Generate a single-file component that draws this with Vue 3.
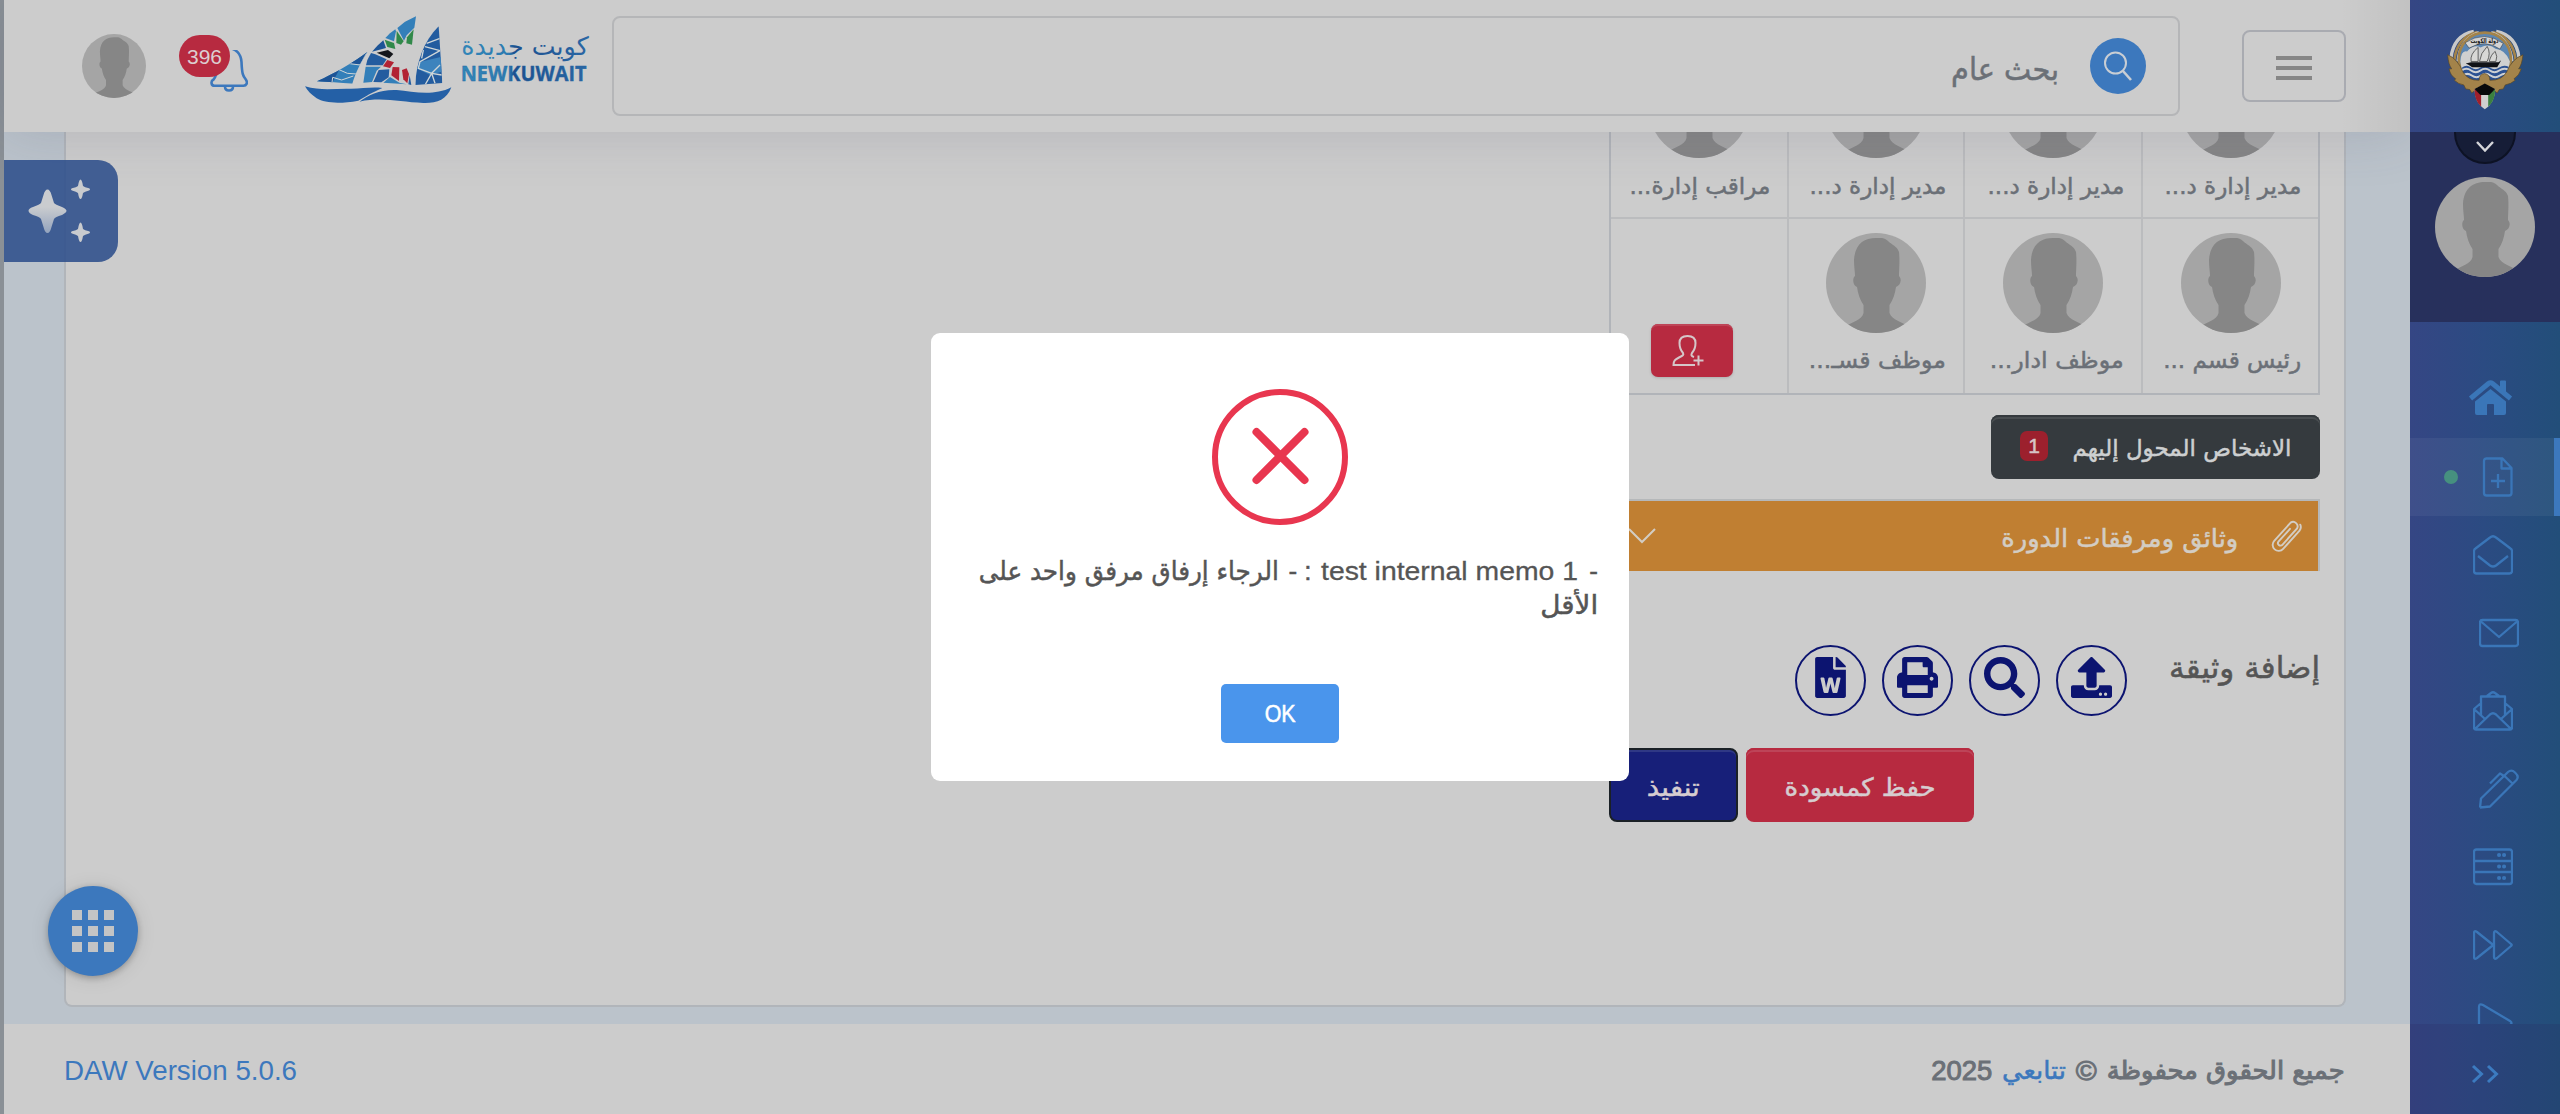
<script setup>
import { h } from 'vue'

// Scales a one-line label horizontally so that it takes a given width in the flow.
const vFit = {
  mounted(el, { value }) {
    const natural = el.getBoundingClientRect().width
    const rtl = getComputedStyle(el).direction === 'rtl'
    el.style.transformOrigin = rtl ? 'right center' : 'left center'
    el.style.transform = `scaleX(${value / natural})`
    el.style[rtl ? 'marginLeft' : 'marginRight'] = `${value - natural}px`
  },
}

const Avatar = () =>
  h('svg', { viewBox: '0 0 100 100', width: '100%', height: '100%', style: 'display:block;border-radius:50%' }, [
    h('rect', { width: 100, height: 100, fill: '#a5a5a5' }),
    h('path', {
      fill: '#868686',
      d: 'M50 5C38 5 29 11 28 27C28 34 29 39 29 43C26 45 27 53 31 54C32 61 34 67 37.500 72V80C36 87 26 89 18 94V100H84V94C76 89 66 87 63.500 80V72C67 67 69 61 70 54C75 52 76 46 73 43C73 36 74 28 73 19C71 13 66 12 62 8C58 4 54 5 50 5Z',
    }),
  ])

const topRow = [
  { name: 'مدير إدارة د...', w: 137 },
  { name: 'مدير إدارة د...', w: 137 },
  { name: 'مدير إدارة د...', w: 137 },
  { name: 'مراقب إدارة...', w: 141 },
]
const bottomRow = [
  { name: 'رئيس قسم ...', w: 138 },
  { name: 'موظف ادار...', w: 134 },
  { name: 'موظف قسـ...', w: 137 },
]

const sailTiles = [
  { c: '#337fb9', p: '378,49 345,65 322,84 342,122 350,106 373,83' },
  { c: '#337fb9', p: '316,88 300,100 286,114 312,124 318,94' },
  { c: '#31894a', p: '320,92 319,129 333,134 341,124' },
  { c: '#31894a', p: '371,88 351,112 349,130 366,134' },
  { c: '#31894a', p: '284,119 292,141 316,147 312,129' },
  { c: '#1d5496', p: '280,121 262,137 246,155 288,144' },
  { c: '#14161b', p: '260,158 294,150 310,162 298,175' },
  { c: '#235c9f', p: '243,159 232,180 228,196 278,196 290,178 256,163' },
  { c: '#b22334', p: '292,180 312,187 300,204 279,199' },
  { c: '#337fb9', p: '227,200 273,200 260,212 246,246 220,248' },
  { c: '#235c9f', p: '266,210 298,208 296,232 274,247 250,246' },
  { c: '#b22334', p: '308,201 328,202 327,243 304,226' },
  { c: '#b22334', p: '336,210 350,205 357,222 352,250 340,238' },
  { c: '#337fb9', p: '300,231 328,248 350,253 280,248' },
  { c: '#235c9f', p: '359,226 364,255 355,253' },
]

const menu = [
  { id: 'file', active: true, d: 'M13 1.500H29.500L38.500 11V36Q38.500 38.500 36 38.500H13.500Q11 38.500 11 36V4Q11 1.500 13.500 1.500M28.500 2V11.500H38M25 17V31M18 24H32' },
  { id: 'open', d: 'M1 36V16Q1 14.500 2.500 13.500L17 2.500Q20 0 23 2.500L37.500 13.500Q39 14.500 39 16V36Q39 38.500 36.500 38.500H3.500Q1 38.500 1 36M5 21L17 30.500Q20 32.500 23 30.500L35 21' },
  { id: 'mail', shift: true, d: 'M3.500 7H36.500Q39 7 39 9.500V30.500Q39 33 36.500 33H3.500Q1 33 1 30.500V9.500Q1 7 3.500 7M2 8.500L20 24L38 8.500' },
  { id: 'letter', d: 'M1 36.500V18L8 12M39 36.500V18L32 12M3 38.500H37Q39 38.500 39 36.500M1 36.500Q1 38.500 3 38.500M8 25V5.500H32V25M14 5L18 2Q20 .500 22 2L26 5M1 18L12 28M39 18L28 28M2 38L17 23.500Q20 21 23 23.500L38 38' },
  { id: 'pen', shift: true, d: 'M1 38.500L2 29.500L25 7L29 3Q32.500 0 36 3.500Q40.500 7.500 37.500 11L11 37.500L1 38.500M25 6.500L34 15M11 14.500L21 4.500L25 7' },
  { id: 'server', d: 'M3.500 2.500H36.500Q39 2.500 39 5V34Q39 37 36.500 37H3.500Q1 37 1 34V5Q1 2.500 3.500 2.500M1 14H39M1 25H39', dots: true },
  { id: 'forward', d: 'M1 8Q1 5 4 7L19 19Q20 20 19 21L4 33Q1 35 1 32ZM21 8Q21 5 24 7L38 19Q39.500 20 38 21L24 33Q21 35 21 32Z' },
  { id: 'play', d: 'M6 36V4Q6 0 10 2L37 18Q40 20 37 22L10 38Q6 40 6 36' },
]

const tools = [
  { id: 'upload', box: '0 0 512 512', d: 'M296 384h-80c-13.300 0-24-10.700-24-24V192h-87.700c-17.800 0-26.700-21.500-14.100-34.100L242.300 5.700c7.500-7.500 19.800-7.500 27.300 0l152.200 152.200c12.600 12.600 3.700 34.100-14.100 34.100H320v168c0 13.300-10.700 24-24 24zm216-8v112c0 13.300-10.700 24-24 24H24c-13.300 0-24-10.700-24-24V376c0-13.300 10.700-24 24-24h136v8c0 30.900 25.100 56 56 56h80c30.900 0 56-25.100 56-56v-8h136c13.300 0 24 10.700 24 24zm-124 88c0-11-9-20-20-20s-20 9-20 20 9 20 20 20 20-9 20-20zm64 0c0-11-9-20-20-20s-20 9-20 20 9 20 20 20 20-9 20-20z' },
  { id: 'search', box: '0 0 512 512', d: 'M505 442.700L405.300 343c-4.500-4.500-10.600-7-17-7H372c27.600-35.300 44-79.700 44-128C416 93.100 322.900 0 208 0S0 93.100 0 208s93.100 208 208 208c48.300 0 92.700-16.400 128-44v16.300c0 6.400 2.500 12.500 7 17l99.700 99.700c9.400 9.400 24.600 9.400 33.900 0l28.300-28.300c9.400-9.400 9.400-24.600.1-34zM208 336c-70.700 0-128-57.200-128-128 0-70.700 57.200-128 128-128 70.700 0 128 57.200 128 128 0 70.700-57.200 128-128 128z' },
  { id: 'print', box: '0 0 512 512', d: 'M448 192V77.250c0-8.490-3.370-16.620-9.370-22.630L393.370 9.370c-6-6-14.140-9.370-22.630-9.370H96C78.330 0 64 14.330 64 32v160c-35.350 0-64 28.650-64 64v112c0 8.840 7.160 16 16 16h48v96c0 17.670 14.330 32 32 32h320c17.670 0 32-14.330 32-32v-96h48c8.840 0 16-7.160 16-16V256c0-35.350-28.650-64-64-64zm-64 256H128v-96h256v96zm0-224H128V64h192v48c0 8.840 7.160 16 16 16h48v96zm48 72c-13.250 0-24-10.750-24-24 0-13.260 10.750-24 24-24s24 10.740 24 24c0 13.250-10.750 24-24 24z' },
  { id: 'word', box: '-64 0 512 512', d: 'M224 136V0H24C10.700 0 0 10.700 0 24v464c0 13.300 10.700 24 24 24h336c13.300 0 24-10.700 24-24V160H248c-13.200 0-24-10.800-24-24zm57.100 120H305c7.700 0 13.400 7.100 11.700 14.700l-38 168c-1.200 5.500-6.100 9.300-11.700 9.300h-38c-5.500 0-10.300-3.800-11.600-9.100-25.800-103.500-20.800-81.200-25.600-110.500h-.5c-1.100 14.300-2.400 17.400-25.600 110.500-1.300 5.300-6.100 9.100-11.600 9.100H117c-5.600 0-10.500-3.900-11.700-9.400l-37.800-168c-1.700-7.500 4-14.600 11.700-14.600h24.500c5.700 0 10.700 4 11.800 9.700 15.600 78 20.100 109.500 21 122.200 1.600-10.200 7.300-32.700 29.400-122.700 1.300-5.400 6.100-9.100 11.700-9.100h29.100c5.600 0 10.400 3.800 11.700 9.200 24 100.400 28.800 124 29.600 129.400-.2-11.200-2.600-17.800 21.600-129.200 1-5.600 5.900-9.500 11.500-9.500zM384 121.900v6.100H256V0h6.100c6.400 0 12.500 2.500 17 7l97.900 98c4.500 4.500 7 10.600 7 16.900z' },
]
</script>

<template>
  <div class="page">
    <div class="edge"></div>

    <div class="main">
      <header class="topbar">
        <div class="user"><Avatar /></div>
        <div class="bell">
          <svg viewBox="0 0 38 42" width="38" height="42" fill="none" stroke="#3c78bd" stroke-width="2.600" stroke-linejoin="round">
            <path d="M18.500 -2C26 -1.500 31 4 31.500 12C32 24 33 26 35.500 29C38.500 33 36 35.800 33.500 35.800H4.500C1 35.800 .500 31 3.500 29.500C6 27 7 24 7 15C7 5 11 -1 18.500 -2Z" />
            <path d="M15 36.500Q15 40.500 19 40.500T23 36.500" />
          </svg>
          <span class="count">396</span>
        </div>
        <svg class="brand" viewBox="0 0 960 390" width="320" height="130">
          <defs>
            <linearGradient id="nk" x1="515" x2="890" y1="0" y2="0" gradientUnits="userSpaceOnUse">
              <stop offset="0" stop-color="#3286b8" /><stop offset=".38" stop-color="#2c7ab0" /><stop offset=".42" stop-color="#1c4f8e" /><stop offset="1" stop-color="#2a66a4" />
            </linearGradient>
            <clipPath id="s1"><path d="M80 244C130 222 195 185 233 155C212 185 196 220 187 251Q130 246 80 244Z" /></clipPath>
            <clipPath id="s3"><path d="M446 79L457 249L376 255C378 190 400 125 446 79Z" /></clipPath>
          </defs>
          <g clip-path="url(#s1)">
            <rect x="70" y="140" width="180" height="120" fill="#337fb9" />
            <path d="M80 244L150 205L125 252ZM175 192L235 150L212 192Z" fill="#1d5496" />
            <g stroke="#cfd6d8" stroke-width="3" fill="none"><path d="M110 225L145 208L172 220L200 222M145 208L120 195M172 190L210 195L235 150M172 190L185 180M125 255L128 232L155 240L190 228" /></g>
          </g>
          <polygon v-for="(t, i) in sailTiles" :key="i" :points="t.p" :fill="t.c" />
          <g clip-path="url(#s3)">
            <rect x="370" y="70" width="95" height="190" fill="#235c9f" />
            <path d="M392 185L455 170V215L420 225L380 205Z" fill="#3c83bd" />
            <g stroke="#cfd6d8" stroke-width="4" fill="none"><path d="M410 130L450 115M405 140L450 152M450 152L390 185L385 205L425 220L455 225M425 220L450 195M425 220L405 255M425 220L435 250M400 150L395 175" /></g>
          </g>
          <path d="M45 259C90 272 130 266 170 266C210 268 240 260 277 264C245 278 225 290 205 302C150 312 105 310 80 295C65 285 52 272 45 259Z" fill="#2460a6" />
          <path d="M208 305C235 285 270 268 320 270C370 275 430 290 484 262C470 300 440 310 400 309C330 307 280 290 208 305Z" fill="#2460a6" />
          <text class="nk-ar" x="896" y="164" direction="rtl" text-anchor="start" textLength="382" lengthAdjust="spacingAndGlyphs" fill="url(#nk)">كويت جديدة</text>
          <text class="nk-en" x="512" y="243" textLength="378" lengthAdjust="spacingAndGlyphs" fill="url(#nk)">NEWKUWAIT</text>
        </svg>
        <div class="search" dir="rtl">
          <span class="search-btn">
            <svg viewBox="0 0 28 30" width="28" height="30" fill="none" stroke="#c9ced4" stroke-width="2"><circle cx="11.500" cy="12" r="10.500" /><path d="M19 20L27 29" stroke-width="2.600" /></svg>
          </span>
          <span v-fit="108" class="search-text">بحث عام</span>
        </div>
        <div class="burger"><i></i><i></i><i></i></div>
      </header>

      <section class="content">
        <div class="card">
          <div class="column" dir="rtl">
            <div class="people">
              <div class="row first">
                <div v-for="(p, i) in topRow" :key="i" class="cell">
                  <div class="pic"><Avatar /></div>
                  <div class="name"><span v-fit="p.w">{{ p.name }}</span></div>
                </div>
              </div>
              <div class="row second">
                <div v-for="(p, i) in bottomRow" :key="i" class="cell">
                  <div class="pic"><Avatar /></div>
                  <div class="name"><span v-fit="p.w">{{ p.name }}</span></div>
                </div>
                <div class="cell add-cell">
                  <div class="add">
                    <svg viewBox="0 0 32 32" width="32" height="32" fill="none" stroke="#d5c6c9" stroke-width="2">
                      <path d="M23 30H1.500C1.500 25.500 3 24.500 7 22.500C11 20.500 12 20 11 18C8 14.500 7.500 11 7.500 8C7.500 3 11 1 15.500 1S23.500 3 23.500 8C23.500 11 23 14.500 20 18C19 20 19 21 22 22M26.500 20.500V30.500M21.500 25.500H31.500" />
                    </svg>
                  </div>
                </div>
              </div>
            </div>

            <div class="transferred">
              <span v-fit="219" class="transferred-text">الاشخاص المحول إليهم</span>
              <span class="badge">1</span>
            </div>

            <div class="docs">
              <svg viewBox="-16 -16 32 32" width="32" height="32" fill="none" stroke="#d3cdc4" stroke-width="1.900" stroke-linecap="round">
                <path transform="rotate(42)" d="M6.500 -10V11.500A6 6 0 0 1 -5.500 11.500V-13A4.500 4.500 0 0 1 3.200 -13V9A2.200 2.200 0 0 1 -1.800 9V-8M6.500 -10V-13A6 6 0 0 0 3 -18" />
              </svg>
              <span v-fit="237" class="docs-text">وثائق ومرفقات الدورة</span>
              <svg class="chev" viewBox="0 0 28 16" width="28" height="16" fill="none" stroke="#d3cdc4" stroke-width="2"><path d="M1 1L14 14L27 1" /></svg>
            </div>

            <div class="attach">
              <span v-fit="151" class="attach-label">إضافة وثيقة</span>
              <div class="tools">
                <span v-for="t in tools" :key="t.id" class="tool">
                  <svg :viewBox="t.box" width="41" height="41" fill="#0c1470"><path :d="t.d" /></svg>
                </span>
              </div>
            </div>

            <div class="actions">
              <div class="btn red"><span v-fit="151">حفظ كمسودة</span></div>
              <div class="btn navy"><span v-fit="53">تنفيذ</span></div>
            </div>
          </div>
        </div>
      </section>

      <footer class="footer">
        <span v-fit="233" class="link version">DAW Version 5.0.6</span>
        <div class="rights" dir="rtl">
          <span v-fit="238" class="bold">جميع الحقوق محفوظة</span>
          <span v-fit="21" class="bold num">©</span>
          <span v-fit="64" class="link">تتابعي</span>
          <span v-fit="61" class="bold num">2025</span>
        </div>
      </footer>
    </div>

    <aside class="sidebar">
      <div class="crest">
        <svg viewBox="40 30 230 245" width="77" height="82">
          <g fill="none" stroke-width="10">
            <path d="M52 118Q60 52 120 40M255 118Q247 52 187 40" stroke="#c9c9c9" />
            <path d="M62 125Q70 58 130 42M245 125Q237 58 177 42" stroke="#a3834a" stroke-width="8" />
            <path d="M72 130Q78 64 135 43M235 130Q229 64 172 43" stroke="#c9c9c9" stroke-width="8" />
          </g>
          <circle cx="153" cy="122" r="78" fill="#5b86b3" stroke="#a3834a" stroke-width="8" />
          <path d="M80 130Q82 95 100 100Q120 78 140 88Q165 75 185 92Q215 95 228 130L222 160H85Z" fill="#cfd0d0" />
          <path d="M85 148Q98 138 112 148T140 148T168 148T196 148T224 146V180L153 200L90 180Z" fill="#2c5293" />
          <path d="M84 157Q98 147 112 157T140 157T168 157T196 157T224 155M88 172Q100 162 114 172T142 172T170 172T198 172T222 170" fill="none" stroke="#cdd0d4" stroke-width="6" />
          <path d="M96 136L112 132H194L202 126L190 147H115L104 140Z" fill="#101217" />
          <path d="M112 130Q108 108 133 88V130ZM137 130Q140 105 160 85Q172 105 160 130ZM166 130Q172 108 184 100Q192 115 186 130Z" fill="#d8d8d6" stroke="#2b2b2b" stroke-width="2" />
          <path d="M94 74Q153 36 208 76L198 93Q153 62 106 90Z" fill="#d4d4d4" stroke="#333" stroke-width="1.500" />
          <text class="crest-text" x="194" y="76" direction="rtl" textLength="84" lengthAdjust="spacingAndGlyphs">دولة الكويت</text>
          <path d="M42 110Q72 122 88 162Q104 188 136 186Q136 168 152 166Q168 168 168 186Q202 188 218 162Q234 122 267 110Q264 140 254 152L262 152Q256 172 240 182L244 186Q230 198 214 200L208 212L196 214L190 224L174 212H130L114 224L108 214L96 212L90 200Q74 198 62 186L66 182Q50 172 46 152L54 152Q44 140 42 110Z" fill="#a3834a" stroke="#594624" stroke-width="2" />
          <path d="M122 212L153 198L184 212Q184 252 153 273Q122 252 122 212Z" fill="#d0d0d0" />
          <path d="M122 212L142 228V265Q122 248 122 212Z" fill="#a0202c" />
          <path d="M184 212L163 228V265Q184 248 184 212Z" fill="#3b8040" />
          <path d="M122 212L153 196L184 212L166 230H140Z" fill="#08090a" />
        </svg>
      </div>
      <div class="profile">
        <div class="drop">
          <svg viewBox="0 0 18 11" width="18" height="11" fill="none" stroke="#d5d6da" stroke-width="2.400"><path d="M1 1L9 9.500L17 1" /></svg>
        </div>
        <div class="me"><Avatar /></div>
      </div>
      <nav class="menu">
        <div class="item home">
          <svg viewBox="0 0 45 35" width="45" height="35" fill="#3a76b8">
            <path d="M2.500 18.500L20.500 3.500Q22.500 2 24.500 3.500L42.500 18.500" fill="none" stroke="#3a76b8" stroke-width="5" />
            <path d="M32 1.500Q32 .500 33 .500H37Q38 .500 38 1.500V14L32 9ZM22.500 9L38 21.500V33Q38 35 36 35H26V25Q26 24 25 24H20Q19 24 19 25V35H9Q7 35 7 33V21.500Z" />
          </svg>
        </div>
        <div v-for="m in menu" :key="m.id" class="item" :class="{ active: m.active, shift: m.shift }">
          <i v-if="m.active" class="dot"></i>
          <svg viewBox="0 0 40 40" width="40" height="40" fill="none" stroke="#3a76b8" stroke-width="2.300" stroke-linejoin="round"><path :d="m.d" /><path v-if="m.dots" d="M26 8h.1M31 8h.1M26 19.500h.1M31 19.500h.1M26 31h.1M31 31h.1" stroke-width="4" stroke-linecap="round" /></svg>
        </div>
      </nav>
      <div class="collapse">
        <svg viewBox="0 0 28 20" width="28" height="20" fill="none" stroke="#3c7bc0" stroke-width="3"><path d="M2 2L10.500 10L2 18M17 2L25.500 10L17 18" /></svg>
      </div>
    </aside>

    <div class="assistant">
      <svg viewBox="0 0 64 64" width="64" height="64">
        <defs><linearGradient id="spark" x1="0" y1="0" x2="0" y2="1"><stop offset=".4" stop-color="#cacccf" /><stop offset="1" stop-color="#93a3bd" /></linearGradient></defs>
        <path d="M21.500 10.500Q24 10.500 25.500 16L28 24Q29 25.500 36 28Q40.500 30 40.500 31.800T36 36Q29 38 28 40L25.500 48Q24 54 21.500 54T17.500 48L15 40Q14 38 7 36Q2.500 34 2.500 31.800T7 28Q14 25.500 15 24L17.500 16Q19 10.500 21.500 10.500Z" fill="url(#spark)" />
        <g fill="#c9cbce"><path d="M54.500 .500Q56 .500 57 7Q58.500 8.500 63 9.300Q65 10.500 63 11.500Q58.500 12.500 57 14Q56 20 54.500 20T52 14Q50.500 12.500 46 11.500Q44 10.500 46 9.300Q50.500 8.500 52 7Q53 .500 54.500 .500Z" /><path d="M54.500 43.500Q56 43.500 57 50Q58.500 51.500 63 52.300Q65 53.500 63 54.500Q58.500 55.500 57 57Q56 63 54.500 63T52 57Q50.500 55.500 46 54.500Q44 53.500 46 52.300Q50.500 51.500 52 50Q53 43.500 54.500 43.500Z" /></g>
      </svg>
    </div>

    <div class="apps"><i v-for="n in 9" :key="n"></i></div>

    <div class="backdrop">
      <div class="modal" dir="rtl">
        <svg class="cross" viewBox="0 0 136 136" width="136" height="136" fill="none" stroke="#e8364f">
          <circle cx="68" cy="68" r="65" stroke-width="6" />
          <path d="M44.500 43L92.500 91M92.500 43L44.500 91" stroke-width="8" stroke-linecap="round" />
        </svg>
        <div class="message">
          <div class="line">
            <span class="dash">-</span>
            <span v-fit="257" dir="ltr" class="latin">test internal memo 1</span>
            <span class="sep">: -</span>
            <span v-fit="300" class="ar">الرجاء إرفاق مرفق واحد على</span>
          </div>
          <div class="line"><span v-fit="58" class="ar">الأقل</span></div>
        </div>
        <div class="ok"><span v-fit="31">OK</span></div>
      </div>
    </div>
  </div>
</template>

<style>
body { margin: 0; overflow: hidden; }
</style>

<style scoped>
.page {
  position: relative; display: flex; width: 2560px; height: 1114px; overflow: hidden;
  background: #bbc3cb; color: #6b7077;
  font-family: "Liberation Sans", "DejaVu Sans", sans-serif; font-size: 24px;
}
.page * { box-sizing: border-box; }
[dir="rtl"] { font-family: "DejaVu Sans", sans-serif; }
[dir="rtl"] span { -webkit-text-stroke: .5px currentColor; }
span { display: inline-block; white-space: nowrap; flex: none; }
.edge { width: 4px; background: #8a9096; }
.main { width: 2406px; display: flex; flex-direction: column; }

.topbar {
  position: relative; z-index: 2; height: 132px; display: flex; align-items: flex-start;
  background: linear-gradient(to right, rgba(0,0,0,0) 2336px, rgba(0,0,0,.05) 2406px), #ccc;
  box-shadow: 0 0 56px rgba(70, 70, 100, .18);
}
.user { width: 64px; height: 64px; margin: 34px 33px 0 78px; }
.bell { position: relative; width: 69px; height: 57px; margin: 35px 42px 0 0; display: flex; justify-content: flex-end; align-items: flex-end; }
.count {
  position: absolute; left: 0; top: 0; width: 51px; height: 42px; border-radius: 21px;
  background: #b72a40; color: #dccdd0; font-size: 21px; line-height: 43px; text-align: center;
}
.brand { flex: none; margin-right: 2px; }
.nk-ar { font-family: "DejaVu Sans", sans-serif; font-size: 76px; }
.nk-en { font-family: "Open Sans", sans-serif; font-weight: 700; font-size: 64px; stroke: #2467a2; stroke-width: 1; }
.crest-text { font: 700 20px "DejaVu Sans", sans-serif; fill: #222; }
.search {
  flex: none; width: 1568px; height: 100px; margin: 16px 62px 0 0; padding-right: 32px;
  border: 2px solid #b5b6b8; border-radius: 8px; display: flex; align-items: center;
}
.search-btn { width: 56px; height: 56px; border-radius: 50%; background: #3c78bd; margin-left: 31px; display: flex; align-items: center; justify-content: center; }
.search-text { font-size: 31px; line-height: 40px; padding-top: 5px; }
.burger {
  width: 104px; height: 72px; margin-top: 30px; border: 2px solid #a9abb1; border-radius: 8px;
  display: flex; flex-direction: column; align-items: center; justify-content: center; gap: 6px; padding-top: 4px;
}
.burger i { width: 36px; height: 4px; background: #868686; }

.content { height: 892px; padding: 0 64px 18px 60px; }
.card { height: 875px; background: #ccc; border: 2px solid #b1b5ba; border-top: 0; border-radius: 0 0 8px 8px; padding-right: 24px; }
.column { width: 711px; margin-left: auto; }
.people { border: 2px solid #b1b4b9; border-top: 0; }
.row { display: grid; grid-template-columns: 177px 178px 176px 176px; }
.first { height: 87px; border-bottom: 2px solid #bbbcbe; }
.second { height: 174px; }
.cell { display: flex; flex-direction: column; align-items: center; border-left: 2px solid #bbbcbe; min-width: 0; }
.cell:last-child { border-left: 0; }
.first .cell { overflow: hidden; justify-content: flex-end; }
.pic { flex: none; width: 100px; height: 100px; }
.name { flex: none; align-self: stretch; height: 59px; padding: 12px 17px 0 0; line-height: 32px; font-size: 23px; }
.second .pic { margin-top: 14px; }
.second .name { padding-top: 11px; }
.add-cell { justify-content: flex-end; padding: 0 14px 16px 0; }
.add {
  width: 82px; height: 53px; background: #b72a40; border-radius: 7px; display: flex; align-items: center; padding-right: 29px;
  box-shadow: inset 0 3px 0 -1px #be4457, 0 1px 3px rgba(0,0,0,.15);
}
.transferred {
  width: 329px; height: 64px; margin-top: 20px; background: #353a3e; border-radius: 8px; color: #cdcfd0;
  box-shadow: inset 0 2px 0 #353a3e, inset 0 4px 0 #494e51; display: flex; align-items: center; padding-right: 29px;
}
.transferred-text { font-size: 23px; margin-top: 1px; }
.badge {
  width: 28px; height: 30px; border-radius: 7px; background: #9c202d; color: #d6c4c6; font: 21px/30px "Liberation Sans", sans-serif;
  text-align: center; margin-right: 24px; margin-top: -2px;
}
.docs {
  height: 72px; margin-top: 20px; border: solid #b5b8ba; border-width: 2px 2px 0; background: #c07f32; color: #d3cdc4;
  display: flex; align-items: center; padding: 0 16px 0 17px;
}
.docs-text { font-size: 25px; margin-right: 32px; padding-top: 4px; }
.chev { margin-right: auto; }
.attach { display: flex; height: 177px; }
.attach-label { height: 40px; line-height: 40px; margin-top: 77px; font-size: 30px; color: #555; }
.tools { display: flex; gap: 16px; margin: 74px 42px 0 0; }
.tool { width: 71px; height: 71px; border: 2px solid #0c1470; border-radius: 50%; display: flex; justify-content: center; padding-top: 10px; }
.actions { display: flex; gap: 8px; padding-right: 346px; }
.btn { height: 74px; border-radius: 8px; color: #d6cdd0; font-size: 25px; display: flex; align-items: center; justify-content: center; padding-top: 4px; }
.red { width: 229px; background: #b72a40; box-shadow: inset 0 2px 0 #b72a40, inset 0 4px 0 #bd4458; }
.navy { width: 130px; background: #171f79; border: 2px solid #1a2026; box-shadow: inset 0 2px 0 #2f3885; }

.footer { height: 90px; background: #ccc; display: flex; justify-content: space-between; align-items: flex-start; padding: 0 65px 0 60px; font-size: 27px; }
.link { color: #3c78bd; }
.version { line-height: 32px; margin-top: 31px; }
.rights { display: flex; gap: 10px; margin-top: 30px; line-height: 34px; font-size: 25px; }
.rights .bold { -webkit-text-stroke: 1px currentColor; }
.rights .num { font-family: "Liberation Sans", sans-serif; font-size: 28px; }

.sidebar { position: relative; z-index: 3; width: 150px; display: flex; flex-direction: column; background: linear-gradient(to right, #354684, #2b4b82 50%, #224e79); }
.crest { flex: none; height: 132px; display: flex; justify-content: center; padding: 28px 0 0 0; }
.profile { flex: none; height: 190px; background: #27305c; display: flex; flex-direction: column; align-items: center; }
.drop {
  width: 62px; height: 32px; border-radius: 0 0 31px 31px; background: #161d37; border: 2px solid #0d1224; border-top: 0;
  display: flex; justify-content: center; padding-top: 9px;
}
.me { width: 100px; height: 100px; margin-top: 13px; }
.menu { height: 702px; padding-top: 37px; overflow: hidden; }
.item { height: 78px; display: flex; align-items: center; padding-left: 63px; }
.item.home { padding-left: 58px; height: 79px; padding-bottom: 2px; }
.item.shift { padding-left: 69px; }
.item.active { background: rgba(255,255,255,.05); border-right: 6px solid #3c78bd; padding-left: 34px; }
.dot { width: 14px; height: 14px; border-radius: 50%; background: #46907f; margin-right: 15px; }
.collapse { flex: none; height: 90px; padding: 38px 0 0 61px; background: rgba(45,30,90,.16); }

.assistant {
  position: absolute; z-index: 4; left: 4px; top: 160px; width: 114px; height: 102px; border-radius: 0 20px 20px 0;
  background: rgba(46, 79, 139, .88); padding: 19px 0 0 22px;
}
.apps {
  position: absolute; z-index: 4; left: 48px; top: 886px; width: 90px; height: 90px; border-radius: 50%; background: #3c78bd;
  display: grid; grid-template-columns: repeat(3, 10px); grid-auto-rows: 10px; gap: 6px; place-content: center;
  box-shadow: 0 2px 6px rgba(0,0,0,.25), 0 2px 20px rgba(0,0,0,.1);
}
.apps i { background: #c3c4c5; }

.backdrop { position: absolute; inset: 0; z-index: 5; display: flex; justify-content: center; align-items: center; }
.modal {
  width: 698px; height: 448px; background: #fff; border-radius: 9px; color: #555;
  display: flex; flex-direction: column; align-items: center; padding: 56px 31px 0;
}
.cross { flex: none; }
.message { align-self: stretch; margin-top: 29px; height: 130px; }
.line { display: flex; align-items: center; height: 34px; line-height: 34px; font-size: 26px; font-family: "Liberation Sans", "DejaVu Sans", sans-serif; }
.dash { width: 20px; }
.sep { width: 42px; text-align: center; }
.line .latin { -webkit-text-stroke: .3px currentColor; }
.ar { font-family: "DejaVu Sans", sans-serif; font-size: 26px; }
.ok { width: 118px; height: 59px; border-radius: 5px; background: #4a95ec; color: #fff; font: 24px/60px "Liberation Sans", sans-serif; text-align: center; }
</style>
